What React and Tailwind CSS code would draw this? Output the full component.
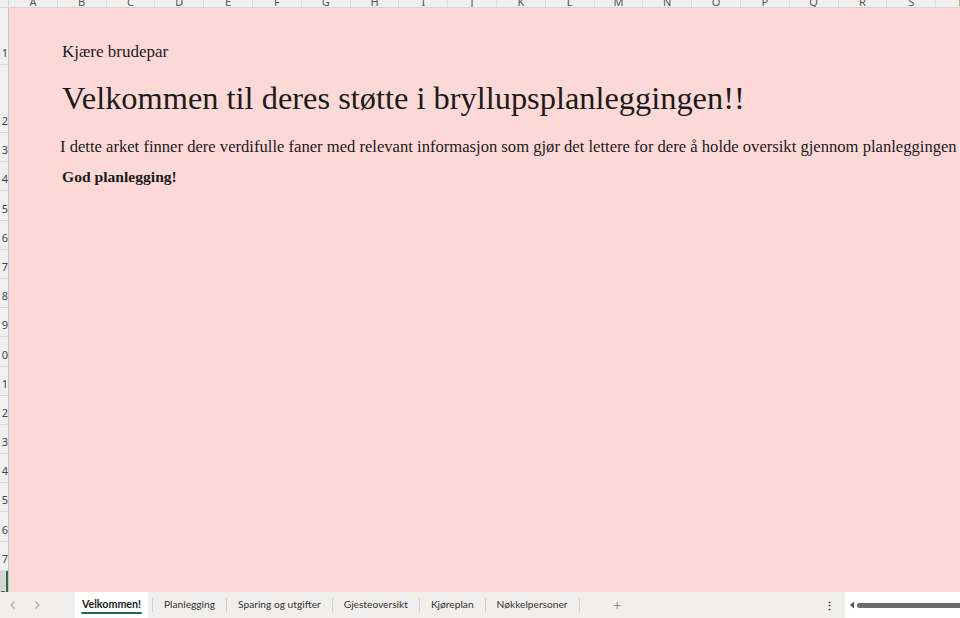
import React from "react";

const COLS = ["A", "B", "C", "D", "E", "F", "G", "H", "I", "J", "K", "L", "M", "N", "O", "P", "Q", "R", "S", "T"];
const ROWS = [
  { n: 1, h: "h-[57px]" },
  { n: 2, h: "h-[68px]" },
  ...Array.from({ length: 15 }, (_, i) => ({ n: i + 3, h: "h-[29.2px]" })),
];
const TABS = ["Planlegging", "Sparing og utgifter", "Gjesteoversikt", "Kjøreplan", "Nøkkelpersoner"];

function ColumnHeader() {
  return (
    <div className="flex h-[8px] shrink-0 border-b border-[#d4d4d4] bg-[#f0f0f0]">
      <div className="w-[9px] shrink-0 border-r border-[#d4d4d4]" />
      <div className="grid grid-cols-[repeat(20,48.8px)] overflow-hidden">
        {COLS.map((c) => (
          <div
            key={c}
            className="relative h-[7px] overflow-hidden border-r border-[#dcdcdc] text-center text-[11px] leading-none text-[#555]"
          >
            <span className="absolute left-0 right-0 -top-[4px]">{c}</span>
          </div>
        ))}
      </div>
    </div>
  );
}

function RowHeader() {
  return (
    <div className="flex w-[9px] shrink-0 flex-col overflow-hidden border-r border-[#c8c8c8] bg-[#f0f0f0]">
      {ROWS.map((r) => (
        <div
          key={r.n}
          className={`${r.h} flex shrink-0 items-end justify-end overflow-hidden border-b border-[#dadada] pb-[6px] text-[11px] leading-none text-[#444]`}
        >
          <span className="whitespace-nowrap">{r.n}</span>
        </div>
      ))}
      {/* rad 18, valgt */}
      <div className="flex flex-1 items-end justify-end overflow-hidden border-r-2 border-[#217346] bg-[#d6d6d6] text-[11px] leading-none text-[#333]">
        <span className="-mb-[8px]">18</span>
      </div>
    </div>
  );
}

function Sheet() {
  return (
    <div
      className="flex flex-1 flex-col overflow-hidden bg-[#fcd9d7] text-[#1b1b1b]"
      style={{ fontFamily: "'Liberation Serif', serif" }}
    >
      <div className="flex h-[57px] shrink-0 items-end pb-[1px] pl-[53px] text-[17px]">
        Kjære brudepar
      </div>
      <div className="flex h-[68px] shrink-0 items-end whitespace-nowrap pb-[19px] pl-[53px] text-[32.4px] leading-none">
        Velkommen til deres støtte i bryllupsplanleggingen!!
      </div>
      <div className="flex h-[29.2px] shrink-0 items-center whitespace-nowrap pl-[51px] text-[16.6px]">
        I dette arket finner dere verdifulle faner med relevant informasjon som gjør det lettere for dere å holde oversikt gjennom planleggingen
      </div>
      <div className="flex h-[29.2px] shrink-0 items-center pl-[53px] text-[15.6px] font-bold">
        God planlegging!
      </div>
    </div>
  );
}

function TabBar() {
  return (
    <div
      className="flex h-[26px] shrink-0 items-center bg-[#f0efed] text-[10.2px] text-[#333]"
      style={{ fontFamily: "Lato, 'Noto Sans', sans-serif" }}
    >
      <div className="flex w-[75px] shrink-0 items-center gap-[16px] pl-[9px] text-[#aaa]">
        <svg width="8" height="10" viewBox="0 0 8 10" fill="none" stroke="currentColor" strokeWidth="1.2">
          <path d="M5.5 1.5 L2 5 L5.5 8.5" />
        </svg>
        <svg width="8" height="10" viewBox="0 0 8 10" fill="none" stroke="currentColor" strokeWidth="1.2">
          <path d="M2.5 1.5 L6 5 L2.5 8.5" />
        </svg>
      </div>
      <div className="flex h-full items-center">
        <div className="flex h-full w-[73px] flex-col items-center justify-center bg-white text-[10.7px] font-bold text-[#1b1b1b]">
          <span className="leading-[14px]">Velkommen!</span>
          <span className="mt-[1px] h-[2px] w-[61px] rounded-full bg-[#1e6b45]" />
        </div>
        <span className="ml-[4px] h-[14px] w-px bg-[#d0d0d0]" />
        {TABS.map((t) => (
          <div key={t} className="flex items-center">
            <span className="px-[11px]">{t}</span>
            <span className="h-[14px] w-px bg-[#d0d0d0]" />
          </div>
        ))}
        <span className="ml-[33px] text-[16px] font-light text-[#555]">+</span>
      </div>
      <div className="ml-auto flex h-full items-center">
        <span className="mr-[10px] text-[11px] font-bold leading-none text-[#333]">⋮</span>
        <div className="flex h-full w-[115px] items-center bg-white pl-[4px]">
          <svg width="6" height="8" viewBox="0 0 6 8">
            <path d="M5 0.5 L1 4 L5 7.5 Z" fill="#555" />
          </svg>
          <div className="ml-[2px] h-[5px] flex-1 rounded-l-full bg-[#6b6b6b]" />
        </div>
      </div>
    </div>
  );
}

export default function App() {
  return (
    <div className="flex h-[618px] w-[960px] flex-col overflow-hidden bg-[#f0f0f0]">
      <ColumnHeader />
      <div className="flex min-h-0 flex-1">
        <RowHeader />
        <Sheet />
      </div>
      <TabBar />
    </div>
  );
}
